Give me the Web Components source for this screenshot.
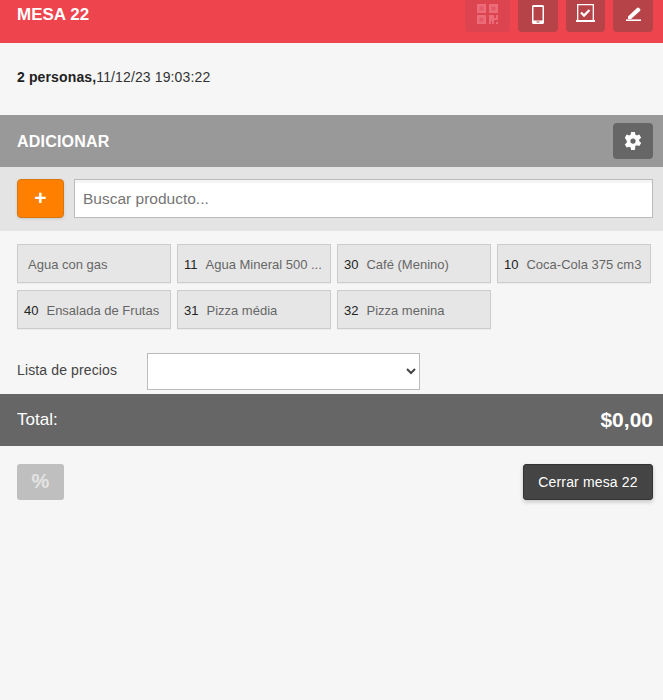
<!DOCTYPE html>
<html lang="es"><head><meta charset="utf-8"><title>Mesa 22</title>
<style>
html,body{margin:0;padding:0;background:#f6f6f6;font-family:"Liberation Sans",Arial,sans-serif;color:#333}
body{height:700px;overflow:hidden}
</style></head><body>
<mesa-app></mesa-app>
<script>
function def(name,html){customElements.define(name,class extends HTMLElement{constructor(){super();this.attachShadow({mode:'open'}).innerHTML=html;}})}
def('icon-btn',`<style>
:host{display:flex;box-sizing:border-box;width:var(--w,40px);height:40px;align-items:center;justify-content:center;background:var(--bg,#b64347);border-radius:4px;color:#fff;padding-top:4px}
</style><slot></slot>`);
def('top-bar',`<style>
:host{display:flex;box-sizing:border-box;height:43px;background:#ee444e;align-items:flex-end;justify-content:space-between;padding:0 10px 11px 17px;overflow:hidden}
h1{margin:0;font:bold 17px/20px "Liberation Sans",Arial,sans-serif;color:#fff;align-self:flex-start;padding-top:5px}
.r{display:flex;gap:8px}
</style><h1><slot name="title"></slot></h1><div class="r"><slot></slot></div>`);
def('info-line',`<style>
:host{display:block;box-sizing:border-box;height:72px;padding:26px 17px 0;font:14px/16px "Liberation Sans",Arial,sans-serif;letter-spacing:.13px;color:#333}
b{color:#222}
</style><b>2 personas,</b>11/12/23 19:03:22`);
def('section-bar',`<style>
:host{display:flex;box-sizing:border-box;height:52px;background:#999;align-items:center;justify-content:space-between;padding:0 10px 0 17px;color:#fff;font:bold 16px/20px "Liberation Sans",Arial,sans-serif;letter-spacing:.2px}
span{padding-top:1px}
.g{display:flex;width:40px;height:36px;background:#666;border-radius:4px;align-items:center;justify-content:center}
</style><span><slot></slot></span><div class="g"><svg width="18" height="18" viewBox="0 0 24 24" fill="#fff"><path fill-rule="evenodd" d="M9.500 0h5l.7 3.600c.7.2 1.300.5 1.900.9l3.300-1.300 2.500 4.300-2.700 2.400c.1.700.1 1.500 0 2.200l2.700 2.400-2.500 4.300-3.300-1.300c-.6.400-1.200.7-1.900.9L14.500 24h-5l-.7-3.600c-.7-.2-1.300-.5-1.900-.9l-3.300 1.300L1.100 16.500l2.700-2.400c-.1-.7-.1-1.500 0-2.200L1.100 7.500l2.500-4.300 3.300 1.300c.6-.4 1.200-.7 1.900-.9zM12 8.500a3.500 3.500 0 1 0 0 7 3.500 3.500 0 0 0 0-7z"/></svg></div>`);
def('search-row',`<style>
:host{display:flex;box-sizing:border-box;height:64px;background:#e4e4e4;padding:12px 10px 13px 17px;gap:10px}
.a{width:47px;height:39px;box-sizing:border-box;background:#ff8000;border:1px solid #d9770f;border-radius:4px;color:#fff;font:bold 21px/35px "Liberation Sans",Arial,sans-serif;text-align:center;box-shadow:0 1px 3px rgba(0,0,0,.12)}
input{flex:1;min-width:0;height:39px;box-sizing:border-box;border:1px solid #bbb;padding:0 8px;font:15.500px "Liberation Sans",Arial,sans-serif;background:#fff;box-shadow:inset 0 3px 0 #f4f4f4;outline:0;border-radius:0}
input::placeholder{color:#757575;opacity:1}
</style><div class="a">+</div><input placeholder="Buscar producto...">`);
def('product-grid',`<style>
:host{display:grid;grid-template-columns:repeat(4,154px);grid-auto-rows:39px;gap:7px 6px;padding:13px 12px 24px 17px}
</style><slot></slot>`);
def('product-tile',`<style>
:host{display:flex;box-sizing:border-box;align-items:center;height:39px;background:#e6e6e6;border:1px solid #ccc;box-shadow:0 1px 1px rgba(0,0,0,.04);padding:3px 0 0 var(--pl,6px);font:13px/16px "Liberation Sans",Arial,sans-serif;color:#666;white-space:nowrap;overflow:hidden}
.c{color:#222;margin-right:var(--gap,8px)}
</style><span class="c"><slot name="code"></slot></span><span><slot></slot></span>`);
def('price-row',`<style>
:host{display:flex;box-sizing:border-box;height:41px;align-items:flex-start;padding-left:17px;font:14px/16px "Liberation Sans",Arial,sans-serif;letter-spacing:.13px;color:#444}
label{width:130px;padding-top:9px}
select{width:273px;height:37px;box-sizing:border-box;background:#fff;border:1px solid #bbb;border-radius:0;outline:0;font:14px "Liberation Sans",Arial,sans-serif;color:#444}
</style><label>Lista de precios</label><select><option></option></select>`);
def('total-bar',`<style>
:host{display:flex;box-sizing:border-box;height:52px;background:#666;color:#fff;align-items:center;justify-content:space-between;padding:0 10px 0 17px;font:17px/20px "Liberation Sans",Arial,sans-serif}
b{font-size:21px}
</style><span>Total:</span><b>$0,00</b>`);
def('action-row',`<style>
:host{display:flex;justify-content:space-between;padding:18px 10px 0 17px}
.p{box-sizing:border-box;width:47px;height:36px;background:#bfbfbf;border-radius:3px;color:#e4e4e4;font:bold 20px/34px "Liberation Sans",Arial,sans-serif;text-align:center}
.c{box-sizing:border-box;width:130px;height:36px;background:#444;border:1px solid #333;border-radius:3px;color:#fff;font:14px/34px "Liberation Sans",Arial,sans-serif;letter-spacing:.15px;text-align:center;box-shadow:0 2px 4px rgba(0,0,0,.2)}
</style><div class="p">%</div><div class="c">Cerrar mesa 22</div>`);
def('mesa-app',`<style>:host{display:block;width:663px}</style>
<top-bar><span slot="title">MESA 22</span>
<icon-btn style="--w:45px;--bg:#dc4550"><svg width="21" height="20" viewBox="0 0 21 20"><path fill="#e45867" d="M2 2h5v5H2zM14 2h5v5h-5zM2 13h5v5H2z"/><g fill="#ec6c7a"><path fill-rule="evenodd" d="M0 0h9v9H0zM2.500 2.500v4h4v-4zM12 0h9v9h-9zM14.500 2.500v4h4v-4zM0 11h9v9H0zM2.500 13.500v4h4v-4zM12 11h5v3h2v-3h2v5h-4v4h-2v-3h-1v3h-2zM19 18h2v2h-2z"/></g></svg></icon-btn>
<icon-btn><svg width="12" height="19" viewBox="0 0 12 19"><path fill="#fff" fill-rule="evenodd" d="M1.500 0h9A1.500 1.500 0 0 1 12 1.500v16a1.500 1.500 0 0 1-1.500 1.500h-9A1.500 1.500 0 0 1 0 17.500v-16A1.500 1.500 0 0 1 1.500 0zM1.500 2v13.500h9V2z"/><rect x="4.500" y="16.500" width="3" height="1" fill="#b64347"/></svg></icon-btn>
<icon-btn style="--w:39px"><svg width="19" height="18" viewBox="0 0 19 18" style="margin-top:-2px"><path fill="none" stroke="#fff" stroke-width="1.300" d="M1.700 16V.7h15.600V16"/><path d="M0 16h19v2H0z" fill="#fff"/><path d="M5 8.500l3 3 5.500-5.500" fill="none" stroke="#fff" stroke-width="2.300"/></svg></icon-btn>
<icon-btn><svg width="15" height="14" viewBox="0 0 15 14"><path d="M2 9.500L11 1l1.500-.5L14.500 2.500 14 4 5 12H2z" fill="#fff"/><path d="M0 13.200h15" stroke="#fff" stroke-width="1.600"/></svg></icon-btn>
</top-bar>
<info-line></info-line>
<section-bar>ADICIONAR</section-bar>
<search-row></search-row>
<product-grid>
<product-tile style="--pl:10px;--gap:0px">Agua con gas</product-tile>
<product-tile><span slot="code">11</span>Agua Mineral 500 ...</product-tile>
<product-tile><span slot="code">30</span>Café (Menino)</product-tile>
<product-tile><span slot="code">10</span>Coca-Cola 375 cm3</product-tile>
<product-tile><span slot="code">40</span>Ensalada de Frutas</product-tile>
<product-tile><span slot="code">31</span>Pizza média</product-tile>
<product-tile><span slot="code">32</span>Pizza menina</product-tile>
</product-grid>
<price-row></price-row>
<total-bar></total-bar>
<action-row></action-row>`);
</script>
</body></html>
